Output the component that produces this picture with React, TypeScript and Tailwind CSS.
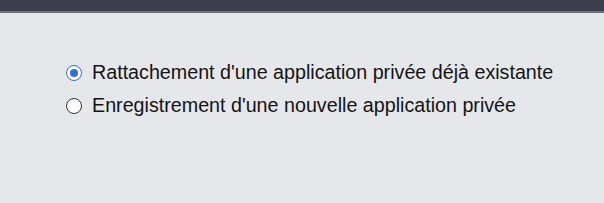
import React from "react";

export default function App() {
  return (
    <div className="w-[604px] h-[203px] bg-[#e6e7eb] flex flex-col" style={{ fontFamily: '"Liberation Sans", Arial, sans-serif' }}>
      <div className="h-[11px] bg-[#3b404c]" />
      <div className="h-[2px] bg-[#6b717c]" />
      <div className="flex flex-col gap-[10px] pl-[66px] pt-[48px]">
        <label className="flex items-center gap-[10px] text-[19.7px] leading-[23px] text-[#141414]">
          <span className="w-[16px] h-[16px] rounded-full border-[1.5px] border-[#2f6fd6] bg-white flex items-center justify-center">
            <span className="w-[8px] h-[8px] rounded-full bg-[#2f6fd6]" />
          </span>
          <span>Rattachement d'une application privée déjà existante</span>
        </label>
        <label className="flex items-center gap-[10px] text-[19.7px] leading-[23px] text-[#141414]">
          <span className="w-[16px] h-[16px] rounded-full border-[1.5px] border-[#333] bg-white" />
          <span>Enregistrement d'une nouvelle application privée</span>
        </label>
      </div>
    </div>
  );
}
